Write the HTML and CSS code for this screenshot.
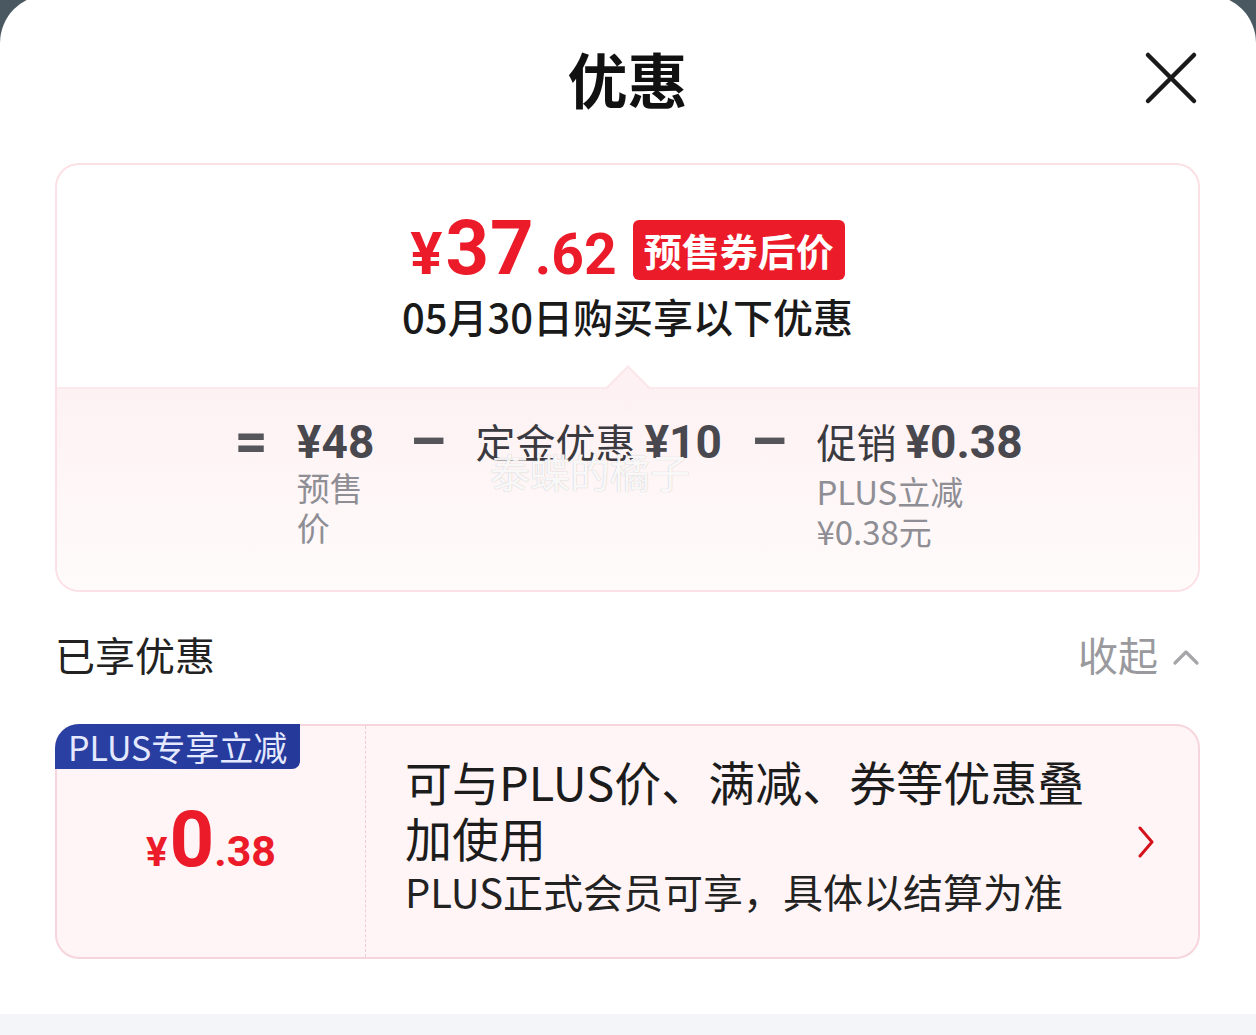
FILE: index.html
```html
<!DOCTYPE html>
<html lang="zh-CN">
<head>
<meta charset="utf-8">
<title>优惠</title>
<link rel="stylesheet" href="styles.css">
</head>
<body>
<div class="sheet">
  <header class="top">
    <span class="top-spacer"></span>
    <h1 class="title">优惠</h1>
    <button class="close" aria-label="关闭">
      <svg width="54" height="54" viewBox="0 0 54 54"><path d="M4 4 L50 50 M50 4 L4 50" stroke="#1a1a1a" stroke-width="4.5" stroke-linecap="round" fill="none"/></svg>
    </button>
  </header>

  <section class="summary">
    <div class="summary-top">
      <div class="price-row">
        <span class="price"><span class="cur">¥</span><span class="int">37</span><span class="dec">.62</span></span>
        <span class="tag">预售券后价</span>
      </div>
      <p class="date">05月30日购买享以下优惠</p>
    </div>
    <div class="summary-bottom">
      <span class="notch"></span>
      <div class="formula">
        <span class="op">=</span>
        <div class="term t1">
          <div class="main"><b>¥48</b></div>
          <div class="sub">预售价</div>
        </div>
        <span class="op">–</span>
        <div class="term">
          <div class="main">定金优惠 <b>¥10</b></div>
        </div>
        <span class="op">–</span>
        <div class="term t3">
          <div class="main">促销 <b>¥0.38</b></div>
          <div class="sub sub3">PLUS立减¥0.38元</div>
        </div>
      </div>
      <span class="watermark">泰蝶的橘子</span>
    </div>
  </section>

  <div class="applied-head">
    <span class="applied-title">已享优惠</span>
    <span class="collapse">收起
      <svg width="28" height="18" viewBox="0 0 28 18"><path d="M3 15 L14 4 L25 15" stroke="#a6a6aa" stroke-width="3.2" stroke-linecap="round" stroke-linejoin="round" fill="none"/></svg>
    </span>
  </div>

  <section class="offer">
    <span class="offer-badge">PLUS专享立减</span>
    <div class="offer-left">
      <span class="offer-price"><span class="cur">¥</span><span class="int">0</span><span class="dec">.38</span></span>
    </div>
    <div class="offer-body">
      <div class="offer-text">
        <p class="offer-title">可与PLUS价、满减、券等优惠叠加使用</p>
        <p class="offer-desc">PLUS正式会员可享，具体以结算为准</p>
      </div>
      <svg class="offer-go" width="18" height="32" viewBox="0 0 18 32"><path d="M3 2 L15 16 L3 30" stroke="#d3121c" stroke-width="3" stroke-linecap="round" stroke-linejoin="round" fill="none"/></svg>
    </div>
  </section>

  <div class="bottom-strip"></div>
</div>
</body>
</html>
```

FILE: styles.css
```css
html, body {
  margin: 0;
  padding: 0;
}

body {
  background: #4a5961;
  font-family: "Noto Sans CJK SC", "Noto Sans", sans-serif;
  color: #1a1a1a;
  height: 1035px;
  overflow: hidden;
}

.sheet {
  margin-top: -5px;
  padding: 5px 56px 0 55px;
  background: #fff;
  border-radius: 48px 48px 0 0;
  min-height: 1040px;
  box-sizing: border-box;
  display: flex;
  flex-direction: column;
}

/* header */
.top {
  height: 156px;
  display: grid;
  grid-template-columns: 1fr auto 1fr;
  align-items: center;
}

.title {
  margin: 0;
  font-size: 60px;
  line-height: 1;
  font-weight: 700;
  color: #111;
}

.close {
  justify-self: end;
  width: 54px;
  height: 54px;
  margin-right: 2px;
  padding: 0;
  border: 0;
  background: none;
  display: block;
}

.close svg {
  display: block;
}

/* summary card */
.summary {
  margin-top: 7px;
  border: 2px solid #fbe0e5;
  border-radius: 24px;
  overflow: hidden;
}

.summary-top {
  padding: 55px 0 49px;
  display: flex;
  flex-direction: column;
  align-items: center;
}

.price-row {
  display: flex;
  align-items: center;
  gap: 16px;
  height: 60px;
}

.price {
  margin-top: 16px;
  color: #ec1b2a;
  font-family: Roboto, "Noto Sans CJK SC", sans-serif;
  font-weight: 700;
  line-height: 60px;
  white-space: nowrap;
}

.price .cur {
  font-size: 60px;
  margin-right: 3px;
}

.price .int {
  font-size: 76px;
  letter-spacing: 1px;
}

.price .dec {
  font-size: 57px;
}

.tag {
  background: #ec1b2a;
  color: #fff;
  font-weight: 700;
  font-size: 38px;
  line-height: 60px;
  padding: 0 11px;
  border-radius: 6px;
}

.date {
  margin: 14px 0 0;
  font-size: 40px;
  line-height: 44px;
  font-weight: 500;
  color: #1a1a1a;
}

.summary-bottom {
  position: relative;
  border-top: 2px solid #fbe9ec;
  background: linear-gradient(#fdf1f3, #fffbfb);
  padding: 27px 0 39px;
}

.notch {
  position: absolute;
  top: -17px;
  left: calc(50% - 16px);
  width: 32px;
  height: 32px;
  box-sizing: border-box;
  background: #fdf1f3;
  border-top: 2px solid #fbe6ea;
  border-left: 2px solid #fbe6ea;
  transform: rotate(45deg);
}

.formula {
  display: flex;
  justify-content: center;
  align-items: flex-start;
  gap: 29px;
}

.op {
  font-family: Roboto, sans-serif;
  font-weight: 700;
  font-size: 58px;
  line-height: 50px;
  color: #55555a;
}

.term .main {
  font-size: 40px;
  line-height: 50px;
  color: #3a3a40;
  white-space: nowrap;
}

.term .main b {
  font-family: Roboto, sans-serif;
  font-weight: 700;
  font-size: 46px;
  color: #48484e;
}

.sub {
  font-size: 33px;
  line-height: 40px;
  color: #8e8e94;
}

.sub3 {
  margin-top: 4px;
}

.t1 {
  width: 84px;
}

.t3 {
  width: 204px;
}

.watermark {
  position: absolute;
  left: 433px;
  top: 60px;
  font-size: 40px;
  line-height: 44px;
  color: rgba(255, 255, 255, 0.92);
  text-shadow: 0 0 1px rgba(120, 120, 120, 0.5);
  pointer-events: none;
}

/* applied header */
.applied-head {
  margin-top: 40px;
  height: 44px;
  display: flex;
  justify-content: space-between;
  align-items: center;
}

.applied-title {
  font-size: 40px;
  line-height: 44px;
  color: #222;
}

.collapse {
  display: flex;
  align-items: center;
  gap: 14px;
  font-size: 40px;
  line-height: 44px;
  color: #9a9a9e;
}

.collapse svg {
  display: block;
  margin-top: 6px;
}

/* offer card */
.offer {
  position: relative;
  margin-top: 48px;
  height: 235px;
  box-sizing: border-box;
  display: flex;
  border: 2px solid #f6d6dc;
  border-radius: 24px;
  background: #fff5f6;
}

.offer-badge {
  position: absolute;
  left: -2px;
  top: -2px;
  padding: 0 13px;
  font-size: 34px;
  line-height: 45px;
  color: #e4e9ff;
  background: linear-gradient(90deg, #2a40a3, #24399a);
  border-radius: 24px 0 8px 0;
}

.offer-left {
  width: 309px;
  flex: none;
  border-right: 1px dashed #efcdd4;
  display: flex;
  align-items: center;
  justify-content: center;
  padding-top: 18px;
  box-sizing: border-box;
}

.offer-price {
  color: #ec1b2a;
  font-family: Roboto, sans-serif;
  font-weight: 700;
  white-space: nowrap;
  line-height: 80px;
}

.offer-price .cur {
  font-size: 40px;
  margin-right: 2px;
}

.offer-price .int {
  font-size: 78px;
}

.offer-price .dec {
  font-size: 43px;
}

.offer-body {
  flex: 1;
  display: flex;
  align-items: center;
  padding-left: 39px;
  padding-right: 43px;
}

.offer-text {
  width: 700px;
  margin-top: -16px;
}

.offer-title {
  margin: 0;
  font-size: 47px;
  line-height: 56px;
  color: #1c1c1c;
}

.offer-desc {
  margin: 2px 0 0;
  font-size: 40px;
  line-height: 48px;
  color: #222;
}

.offer-go {
  margin-left: auto;
  display: block;
}

.bottom-strip {
  margin: 55px -56px 0 -55px;
  height: 30px;
  background: #f4f5f9;
}
```
